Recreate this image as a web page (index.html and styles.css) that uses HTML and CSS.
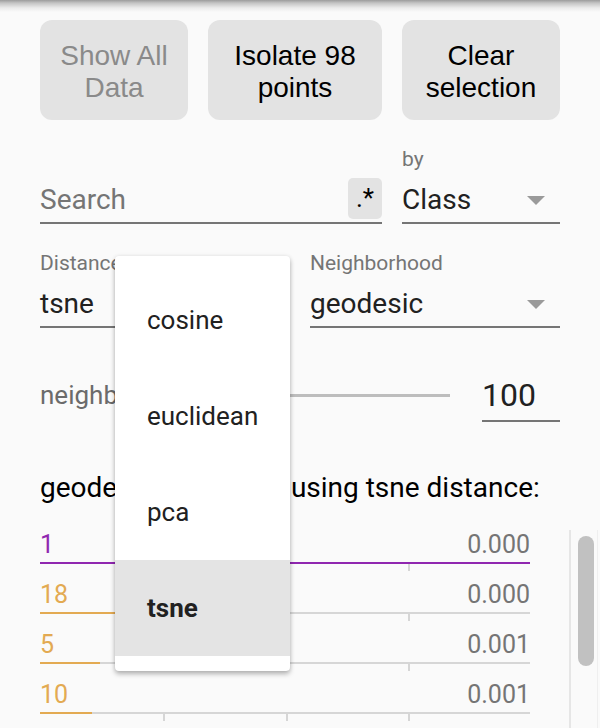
FILE: index.html
```html
<!DOCTYPE html>
<html>
<head>
<meta charset="utf-8">
<link rel="stylesheet" href="styles.css">
</head>
<body>
<div class="topshadow"></div>
<div class="content">
  <div class="buttons">
    <button class="btn btn-show disabled">Show All<br>Data</button>
    <button class="btn btn-isolate">Isolate 98<br>points</button>
    <button class="btn btn-clear">Clear<br>selection</button>
  </div>

  <div class="field-row">
    <div class="field field-search">
      <div class="input">
        <span class="placeholder">Search</span>
        <span class="regex">.*</span>
      </div>
    </div>
    <div class="field field-by">
      <div class="label">by</div>
      <div class="input">
        <span class="value">Class</span>
        <span class="arrow"></span>
      </div>
    </div>
  </div>

  <div class="field-row second">
    <div class="field field-half">
      <div class="label">Distance</div>
      <div class="input">
        <span class="value">tsne</span>
      </div>
    </div>
    <div class="field field-half">
      <div class="label">Neighborhood</div>
      <div class="input">
        <span class="value">geodesic</span>
        <span class="arrow"></span>
      </div>
    </div>
  </div>

  <div class="slider-row">
    <div class="slider-label">neighbors</div>
    <div class="slider-track"></div>
    <div class="num-input">100</div>
  </div>

  <div class="heading">geodesic neighbors using tsne distance:</div>

  <div class="list-wrap">
    <div class="list">
      <div class="item purple">
        <div class="item-line"><span class="idx">1</span><span class="val">0.000</span></div>
        <div class="bar"><div class="fill" style="width:100%"></div></div>
        <div class="ticks"></div>
      </div>
      <div class="item orange">
        <div class="item-line"><span class="idx">18</span><span class="val">0.000</span></div>
        <div class="bar"><div class="fill" style="width:110px"></div></div>
        <div class="ticks"></div>
      </div>
      <div class="item orange">
        <div class="item-line"><span class="idx">5</span><span class="val">0.001</span></div>
        <div class="bar"><div class="fill" style="width:60px"></div></div>
        <div class="ticks"></div>
      </div>
      <div class="item orange">
        <div class="item-line"><span class="idx">10</span><span class="val">0.001</span></div>
        <div class="bar"><div class="fill" style="width:52px"></div></div>
        <div class="ticks"></div>
      </div>
    </div>
    <div class="scrollbar"><div class="thumb"></div></div>
  </div>
</div>

<div class="dropdown">
  <div class="opt">cosine</div>
  <div class="opt">euclidean</div>
  <div class="opt">pca</div>
  <div class="opt selected">tsne</div>
</div>
</body>
</html>
```

FILE: styles.css
```css
html, body {
  margin: 0;
  padding: 0;
  background: #fafafa;
  overflow: hidden;
}

body {
  position: relative;
  width: 600px;
  height: 728px;
  font-family: Roboto, "Noto Sans", sans-serif;
  color: #212121;
}

.topshadow {
  height: 12px;
  background: linear-gradient(to bottom, #9c9c9c 0, #c4c4c4 3px, #ececec 8px, #fafafa 12px);
}

.content {
  padding: 8px 40px 0;
}

/* buttons */
.buttons {
  display: flex;
  gap: 20px;
  height: 100px;
}

.btn {
  border: 0;
  padding: 4px 0 0;
  margin: 0;
  border-radius: 12px;
  background: #e3e3e3;
  color: #000;
  font-family: "Liberation Sans", Arial, sans-serif;
  font-size: 28px;
  line-height: 32px;
  text-align: center;
  display: flex;
  align-items: center;
  justify-content: center;
}

.btn-show { width: 148px; }
.btn-isolate { width: 174px; }
.btn-clear { width: 158px; }

.btn.disabled {
  color: #8a8a8a;
}

/* fields */
.field-row {
  display: flex;
  gap: 20px;
  align-items: flex-end;
  margin-top: 27px;
}

.field-search { width: 342px; }
.field-by { width: 158px; }
.field-half { width: 250px; }

.label {
  height: 24px;
  font-size: 21px;
  line-height: 24px;
  color: #757575;
}

.input {
  margin-top: 9px;
  height: 40px;
  padding-bottom: 2px;
  border-bottom: 2px solid #757575;
  display: flex;
  align-items: center;
  font-size: 28px;
  line-height: 42px;
}

.placeholder {
  color: #757575;
  flex: 1;
}

.value {
  color: #212121;
  flex: 1;
}

.regex {
  align-self: flex-end;
  margin-bottom: 1px;
  width: 34px;
  height: 41px;
  border-radius: 5px;
  background: #e3e3e3;
  color: #000;
  font-size: 26px;
  line-height: 41px;
  text-align: center;
}

.arrow {
  width: 0;
  height: 0;
  border-left: 9px solid transparent;
  border-right: 9px solid transparent;
  border-top: 9px solid #9a9a9a;
  margin-right: 15px;
}

/* slider */
.slider-row {
  display: flex;
  align-items: flex-start;
  margin-top: 47px;
}

.slider-label {
  font-size: 26px;
  font-weight: 400;
  line-height: 40px;
  color: #6b6b6b;
  width: 130px;
}

.slider-track {
  flex: 1;
  height: 3px;
  margin-top: 19px;
  margin-right: 32px;
  background: #bdbdbd;
}

.num-input {
  width: 78px;
  height: 40px;
  padding-bottom: 5px;
  border-bottom: 2px solid #757575;
  font-size: 32px;
  line-height: 40px;
  color: #212121;
}

/* heading */
.heading {
  margin-top: 48px;
  font-size: 28px;
  line-height: 36px;
  color: #000;
}

/* list */
.list-wrap {
  display: flex;
  margin-top: 24px;
  margin-right: -40px;
  height: 198px;
  overflow: hidden;
}

.list {
  width: 490px;
  flex: 0 0 490px;
  padding-top: 1px;
}

.item {
  height: 50px;
}

.item-line {
  display: flex;
  justify-content: space-between;
  height: 30px;
  font-size: 25px;
  line-height: 28px;
}

.val {
  color: #757575;
}

.purple .idx { color: #9027b0; }
.orange .idx { color: #e3aa52; }

.bar {
  margin-top: 1px;
  height: 2px;
  background: #d6d6d6;
}

.fill {
  height: 2px;
}

.purple .fill { background: #9027b0; }
.orange .fill { background: #e3aa52; }

.ticks {
  height: 7px;
  background:
    linear-gradient(#d6d6d6, #d6d6d6) 123px 0 / 2px 100% no-repeat,
    linear-gradient(#d6d6d6, #d6d6d6) 246px 0 / 2px 100% no-repeat,
    linear-gradient(#d6d6d6, #d6d6d6) 368px 0 / 2px 100% no-repeat;
}

.scrollbar {
  margin-left: 39px;
  width: 26px;
  flex: 0 0 26px;
  border-left: 2px solid #e6e6e6;
  border-right: 1px solid #efefef;
}

.thumb {
  margin-top: 6px;
  margin-left: 7px;
  width: 16px;
  height: 130px;
  border-radius: 8px;
  background: #c1c1c1;
}

/* dropdown overlay */
.dropdown {
  position: absolute;
  left: 115px;
  top: 256px;
  width: 175px;
  padding: 16px 0 15px;
  background: #fff;
  border-radius: 4px;
  box-shadow: 0 3px 5px rgba(0, 0, 0, 0.28), 0 0 4px rgba(0, 0, 0, 0.08);
  z-index: 10;
}

.opt {
  height: 96px;
  line-height: 96px;
  padding-left: 32px;
  font-size: 26px;
  color: #212121;
}

.opt.selected {
  background: #e4e4e4;
  font-weight: 700;
}
```
